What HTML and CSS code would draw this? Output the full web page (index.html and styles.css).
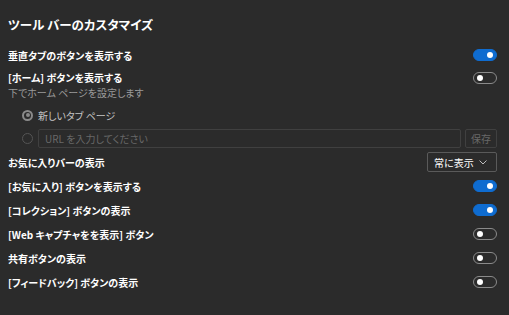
FILE: index.html
```html
<!DOCTYPE html>
<html lang="ja">
<head>
    <meta charset="UTF-8">
    <title>ツール バーのカスタマイズ</title>
    <link rel="stylesheet" href="styles.css">
</head>
<body>
    <!-- Toolbar customisation section -->
    <section class="panel">
        <h1 class="title">ツール バーのカスタマイズ</h1>

        <div class="row">
            <span class="label">垂直タブのボタンを表示する</span>
            <span class="toggle on"></span>
        </div>

        <div class="row tall">
            <div class="stack">
                <span class="label">[ホーム] ボタンを表示する</span>
                <span class="hint">下でホーム ページを設定します</span>
            </div>
            <span class="toggle"></span>
        </div>

        <div class="row sub">
            <span class="radio checked"></span>
            <span class="radioLabel">新しいタブ ページ</span>
        </div>

        <div class="row sub urlRow">
            <span class="radio"></span>
            <input class="urlInput" type="text" placeholder="URL を入力してください" disabled>
            <button class="saveBtn" disabled>保存</button>
        </div>

        <div class="row">
            <span class="label">お気に入りバーの表示</span>
            <div class="dropdown">
                <span>常に表示</span>
                <svg width="8" height="5" viewBox="0 0 8 5"><path d="M0.5 0.5 L4 4 L7.5 0.5" fill="none" stroke="#bdbdbd" stroke-width="1"/></svg>
            </div>
        </div>

        <div class="row">
            <span class="label">[お気に入り] ボタンを表示する</span>
            <span class="toggle on"></span>
        </div>

        <div class="row">
            <span class="label">[コレクション] ボタンの表示</span>
            <span class="toggle on"></span>
        </div>

        <div class="row">
            <span class="label">[Web キャプチャをを表示] ボタン</span>
            <span class="toggle"></span>
        </div>

        <div class="row">
            <span class="label">共有ボタンの表示</span>
            <span class="toggle"></span>
        </div>

        <div class="row">
            <span class="label">[フィードバック] ボタンの表示</span>
            <span class="toggle"></span>
        </div>
    </section>
</body>
</html>
```

FILE: styles.css
```css
/* Page base */
body {
    margin: 0;
    background: #2b2b2b;
    color: #ffffff;
    font-family: "Noto Sans CJK JP", "Noto Sans", sans-serif;
    font-size: 10px;
    font-feature-settings: "palt";
}

.panel {
    padding: 15px 12px 0 8px;
}

.title {
    margin: 0 0 8px 0;
    font-size: 12.5px;
    line-height: 20px;
    font-weight: 700;
}

/* Setting rows */
.row {
    display: flex;
    align-items: center;
    justify-content: space-between;
    height: 24px;
}

.row.tall {
    height: 36px;
    align-items: flex-start;
    padding-top: 3px;
    box-sizing: border-box;
}

.row.tall .toggle {
    margin-top: 2px;
}

.stack {
    display: flex;
    flex-direction: column;
}

.label {
    font-weight: 700;
    line-height: 13px;
}

.stack .label,
.hint {
    line-height: 15px;
}

.hint {
    color: #9a9a9a;
}

/* Radio options */
.row.sub {
    justify-content: flex-start;
    padding-left: 14px;
    gap: 5px;
}

.urlRow {
    height: 23px;
}

.radio {
    width: 11px;
    height: 11px;
    border-radius: 50%;
    border: 1px solid #555555;
    box-sizing: border-box;
    position: relative;
    flex: none;
}

.radio.checked {
    border: 2px solid #8a8a8a;
}

.radio.checked::after {
    content: "";
    position: absolute;
    left: 1.5px;
    top: 1.5px;
    width: 4px;
    height: 4px;
    border-radius: 50%;
    background: #8a8a8a;
}

.radioLabel {
    color: #c4c4c4;
}

.urlInput {
    flex: 1;
    height: 19px;
    box-sizing: border-box;
    margin: 0;
    padding: 0 6px;
    background: #2b2b2b;
    border: 1px solid #404040;
    border-radius: 2px;
    font-family: inherit;
    font-size: 10px;
    font-feature-settings: "palt";
}

.urlInput::placeholder {
    color: #686868;
}

.saveBtn {
    width: 32px;
    height: 19px;
    margin: 0 0 0 -1px;
    padding: 0;
    background: #2b2b2b;
    border: 1px solid #404040;
    border-radius: 2px;
    color: #686868;
    font-family: inherit;
    font-size: 10px;
}

/* Dropdown */
.dropdown {
    display: flex;
    align-items: center;
    justify-content: space-between;
    width: 70px;
    height: 20px;
    box-sizing: border-box;
    padding: 0 9px 0 6px;
    border: 1px solid #5a5a5a;
    border-radius: 2px;
    color: #ffffff;
    white-space: nowrap;
    font-size: 10px;
}

/* Toggle switches */
.toggle {
    width: 24px;
    height: 12px;
    border-radius: 6px;
    border: 1px solid #8a8a8a;
    box-sizing: border-box;
    position: relative;
    flex: none;
}

.toggle::after {
    content: "";
    position: absolute;
    top: 2px;
    left: 3px;
    width: 6px;
    height: 6px;
    border-radius: 50%;
    background: #ffffff;
}

.toggle.on {
    background: #0f6cd0;
    border-color: #0f6cd0;
}

.toggle.on::after {
    left: auto;
    right: 3px;
}
```
